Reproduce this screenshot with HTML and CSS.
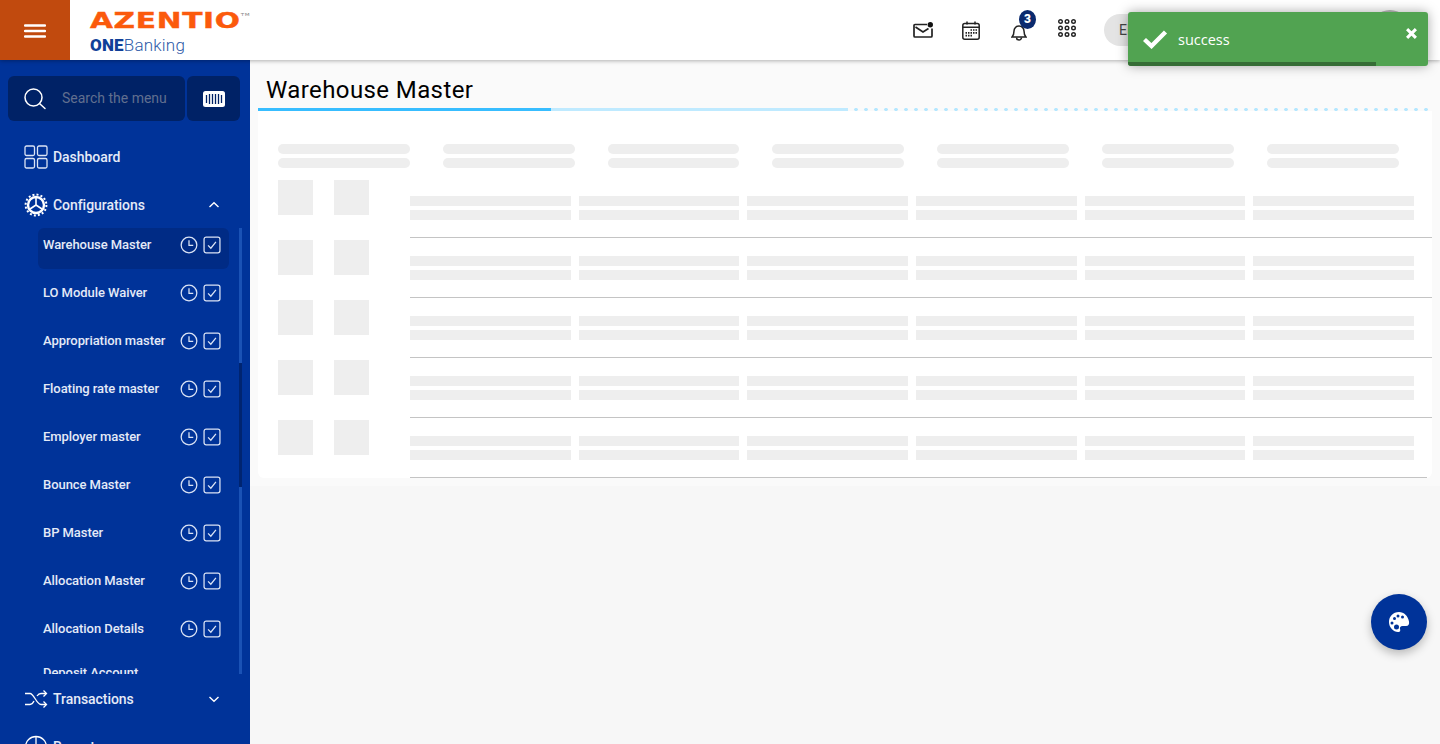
FILE: index.html
```html
<!DOCTYPE html>
<html lang="en">
<head>
    <meta charset="UTF-8">
    <meta name="viewport" content="width=device-width, initial-scale=1.0">
    <title>Warehouse Master</title>
    <link rel="stylesheet" href="styles.css">
</head>
<body>
    <header class="topbar">
        <button class="menu-btn" title="Menu">
            <svg width="22" height="14" viewBox="0 0 22 14"><path d="M1 1.500h20M1 7h20M1 12.500h20" stroke="#fff" stroke-width="2.400" stroke-linecap="round"/></svg>
        </button>
        <div class="logo">
            <div class="logo-main">AZENTIO<sup>TM</sup></div>
            <div class="logo-sub"><b>ONE</b>Banking</div>
        </div>
        <div class="top-actions">
            <div class="top-slot">
                <svg width="20" height="16" viewBox="0 0 20 16" fill="none" stroke="#222" stroke-width="1.700"><path d="M14 2.500H2a1 1 0 0 0-1 1V14a1 1 0 0 0 1 1h16a1 1 0 0 0 1-1V6.500"/><path d="M2.500 5l7.500 5 5.500-3.500"/><circle cx="17.300" cy="2.700" r="2.700" fill="#111" stroke="none"/></svg>
            </div>
            <div class="top-slot">
                <svg width="18" height="19" viewBox="0 0 18 19" fill="none" stroke="#222" stroke-width="1.500"><rect x="0.800" y="2.500" width="16.400" height="15.700" rx="2"/><path d="M0.800 6.300h16.400M5 0.500v3M13 0.500v3"/><path d="M8.500 9h1.500M11 9h1.500M13.500 9h1.500M3.500 11.800h1.500M6 11.800h1.500M8.500 11.800h1.500M11 11.800h1.500M13.500 11.800h1.500M3.500 14.600h1.500M6 14.600h1.500M8.500 14.600h1.500" stroke-width="1.700"/></svg>
            </div>
            <div class="top-slot">
                <div class="bell">
                    <svg width="16" height="19" viewBox="0 0 16 19" fill="none" stroke="#222" stroke-width="1.500"><path d="M1 15c1.500-1.500 2-2.500 2-6a5 5 0 0 1 10 0c0 3.500 .5 4.500 2 6z"/><path d="M5.500 15.500a2.500 2.500 0 0 0 5 0"/></svg>
                    <span class="badge">3</span>
                </div>
            </div>
            <div class="top-slot">
                <svg class="grid-icon" width="18" height="18" viewBox="0 0 18 18" fill="none" stroke="#222" stroke-width="1.400"><circle cx="2.500" cy="2.500" r="1.800"/><circle cx="9" cy="2.500" r="1.800"/><circle cx="15.500" cy="2.500" r="1.800"/><circle cx="2.500" cy="9" r="1.800"/><circle cx="9" cy="9" r="1.800"/><circle cx="15.500" cy="9" r="1.800"/><circle cx="2.500" cy="15.500" r="1.800"/><circle cx="9" cy="15.500" r="1.800"/><circle cx="15.500" cy="15.500" r="1.800"/></svg>
            </div>
            <div class="lang-pill">EN</div>
            <div class="avatar"></div>
        </div>
    </header>

    <div class="layout">
        <aside class="sidebar">
            <div class="search-row">
                <div class="search-box">
                    <svg width="24" height="24" viewBox="0 0 24 24" fill="none" stroke="#fff" stroke-width="1.500"><circle cx="10.500" cy="10.500" r="8.500"/><path d="M16.500 16.500l5.500 5" stroke-linecap="round"/></svg>
                    <span>Search the menu</span>
                </div>
                <div class="scan-box">
                    <svg width="22" height="16" viewBox="0 0 22 16"><rect width="22" height="16" rx="2.500" fill="#fff"/><path d="M3.500 4v8M6.500 3v10M9.500 3v10M12.500 3v10M15.500 3v10M18.500 4v8" stroke="#002266" stroke-width="1.300"/></svg>
                </div>
            </div>

            <a class="nav-item">
                <svg width="24" height="24" viewBox="0 0 24 24" fill="none" stroke="#dbe4f5" stroke-width="1.300"><rect x="1" y="1" width="9.500" height="9.500" rx="1.500"/><rect x="13.500" y="1" width="9.500" height="9.500" rx="1.500"/><rect x="1" y="13.500" width="9.500" height="9.500" rx="1.500"/><rect x="13.500" y="13.500" width="9.500" height="9.500" rx="1.500"/></svg>
                <span>Dashboard</span>
            </a>
            <a class="nav-item">
                <svg width="24" height="24" viewBox="0 0 24 24" fill="none" stroke="#fff"><circle cx="12" cy="12" r="8" stroke-width="2.400"/><circle cx="12" cy="12" r="10.400" stroke-width="2" stroke-dasharray="2 2.100"/><path d="M12 12V5M12 12l6 4M12 12l-6 4" stroke-width="1.600"/></svg>
                <span>Configurations</span>
                <svg class="chev" width="12" height="8" viewBox="0 0 12 8" fill="none" stroke="#fff" stroke-width="1.400"><path d="M1.500 6L6 1.800 10.500 6"/></svg>
            </a>

            <div class="submenu">
                <div class="sub-scroll">
                    <a class="sub-item active"><span>Warehouse Master</span><svg class="sub-clock" width="18" height="18" viewBox="0 0 17 17"><use href="#ic-clock"/></svg><svg width="18" height="18" viewBox="0 0 17 17"><use href="#ic-check"/></svg></a>
                    <a class="sub-item"><span>LO Module Waiver</span><svg class="sub-clock" width="18" height="18" viewBox="0 0 17 17"><use href="#ic-clock"/></svg><svg width="18" height="18" viewBox="0 0 17 17"><use href="#ic-check"/></svg></a>
                    <a class="sub-item"><span>Appropriation master</span><svg class="sub-clock" width="18" height="18" viewBox="0 0 17 17"><use href="#ic-clock"/></svg><svg width="18" height="18" viewBox="0 0 17 17"><use href="#ic-check"/></svg></a>
                    <a class="sub-item"><span>Floating rate master</span><svg class="sub-clock" width="18" height="18" viewBox="0 0 17 17"><use href="#ic-clock"/></svg><svg width="18" height="18" viewBox="0 0 17 17"><use href="#ic-check"/></svg></a>
                    <a class="sub-item"><span>Employer master</span><svg class="sub-clock" width="18" height="18" viewBox="0 0 17 17"><use href="#ic-clock"/></svg><svg width="18" height="18" viewBox="0 0 17 17"><use href="#ic-check"/></svg></a>
                    <a class="sub-item"><span>Bounce Master</span><svg class="sub-clock" width="18" height="18" viewBox="0 0 17 17"><use href="#ic-clock"/></svg><svg width="18" height="18" viewBox="0 0 17 17"><use href="#ic-check"/></svg></a>
                    <a class="sub-item"><span>BP Master</span><svg class="sub-clock" width="18" height="18" viewBox="0 0 17 17"><use href="#ic-clock"/></svg><svg width="18" height="18" viewBox="0 0 17 17"><use href="#ic-check"/></svg></a>
                    <a class="sub-item"><span>Allocation Master</span><svg class="sub-clock" width="18" height="18" viewBox="0 0 17 17"><use href="#ic-clock"/></svg><svg width="18" height="18" viewBox="0 0 17 17"><use href="#ic-check"/></svg></a>
                    <a class="sub-item"><span>Allocation Details</span><svg class="sub-clock" width="18" height="18" viewBox="0 0 17 17"><use href="#ic-clock"/></svg><svg width="18" height="18" viewBox="0 0 17 17"><use href="#ic-check"/></svg></a>
                    <a class="sub-item last"><span>Deposit Account</span></a>
                </div>
                <div class="sub-track"><div class="sub-thumb"></div></div>
            </div>

            <a class="nav-item">
                <svg width="24" height="24" viewBox="0 0 24 24" fill="none" stroke="#fff" stroke-width="1.300"><path d="M1 6.500h5c4 0 6.500 11 11 11h5"/><path d="M1 17.500h5c1.800 0 3-1.500 4-3.500M13 9c1-1.500 2.300-2.500 4-2.500h5"/><path d="M19.500 3.500l3 3-3 3M19.500 14.500l3 3-3 3"/></svg>
                <span>Transactions</span>
                <svg class="chev" width="12" height="8" viewBox="0 0 12 8" fill="none" stroke="#fff" stroke-width="1.400"><path d="M1.500 2L6 6.200 10.500 2"/></svg>
            </a>
            <a class="nav-item">
                <svg width="24" height="24" viewBox="0 0 24 24" fill="none" stroke="#fff" stroke-width="1.300"><circle cx="12" cy="12" r="10.500"/><path d="M12 1.500V22M12 12h10.500"/></svg>
                <span>Reports</span>
            </a>
        </aside>

        <main class="content">
            <h1 class="page-title">Warehouse Master</h1>
            <div class="title-rule">
                <div class="rule-strong"></div>
                <div class="rule-light"></div>
                <div class="rule-dots"></div>
            </div>
            <section class="card">
                <div class="sk-head">
                    <div class="sk-pair"><i></i><i></i></div>
                    <div class="sk-pair"><i></i><i></i></div>
                    <div class="sk-pair"><i></i><i></i></div>
                    <div class="sk-pair"><i></i><i></i></div>
                    <div class="sk-pair"><i></i><i></i></div>
                    <div class="sk-pair"><i></i><i></i></div>
                    <div class="sk-pair"><i></i><i></i></div>
                </div>
                <div class="sk-row">
                    <div class="sk-squares"><i></i><i></i></div>
                    <div class="sk-cells"><div><i></i><i></i></div><div><i></i><i></i></div><div><i></i><i></i></div><div><i></i><i></i></div><div><i></i><i></i></div><div><i></i><i></i></div></div>
                </div>
                <div class="sk-row">
                    <div class="sk-squares"><i></i><i></i></div>
                    <div class="sk-cells"><div><i></i><i></i></div><div><i></i><i></i></div><div><i></i><i></i></div><div><i></i><i></i></div><div><i></i><i></i></div><div><i></i><i></i></div></div>
                </div>
                <div class="sk-row">
                    <div class="sk-squares"><i></i><i></i></div>
                    <div class="sk-cells"><div><i></i><i></i></div><div><i></i><i></i></div><div><i></i><i></i></div><div><i></i><i></i></div><div><i></i><i></i></div><div><i></i><i></i></div></div>
                </div>
                <div class="sk-row">
                    <div class="sk-squares"><i></i><i></i></div>
                    <div class="sk-cells"><div><i></i><i></i></div><div><i></i><i></i></div><div><i></i><i></i></div><div><i></i><i></i></div><div><i></i><i></i></div><div><i></i><i></i></div></div>
                </div>
                <div class="sk-row">
                    <div class="sk-squares"><i></i><i></i></div>
                    <div class="sk-cells"><div><i></i><i></i></div><div><i></i><i></i></div><div><i></i><i></i></div><div><i></i><i></i></div><div><i></i><i></i></div><div><i></i><i></i></div></div>
                </div>
            </section>
        </main>
    </div>

    <div class="toast">
        <svg width="26" height="20" viewBox="0 0 26 20" fill="none" stroke="#fff" stroke-width="4.400"><path d="M1.500 10.500l7 6.500L22.500 3"/></svg>
        <span class="toast-msg">success</span>
        <svg class="toast-close" width="11" height="11" viewBox="0 0 10 10" stroke="#fff" stroke-width="2.800"><path d="M1 1l8 8M9 1l-8 8"/></svg>
        <div class="toast-progress"></div>
    </div>

    <button class="fab" title="Theme">
        <svg width="22" height="22" viewBox="0 0 22 22"><path fill="#fff" fill-rule="evenodd" d="M11 1C5 1 1 5.500 1 11c0 5.500 4.500 10 9 10 2.500 0 2.500-1.500 2-3-.5-1.500.5-3 2.500-3H18c2.500 0 3.500-2 3-4.500C20 5 16 1 11 1zM6.500 6a1.500 1.500 0 1 1 0 3 1.500 1.500 0 0 1 0-3zM4 10.500a1.500 1.500 0 1 1 0 3 1.500 1.500 0 0 1 0-3zM10 3.500a1.500 1.500 0 1 1 0 3 1.500 1.500 0 0 1 0-3zM14.500 4.500a1.500 1.500 0 1 1 0 3 1.500 1.500 0 0 1 0-3zM8.500 13.500a2.500 2.500 0 1 1 0 5 2.500 2.500 0 0 1 0-5z"/></svg>
    </button>

    <svg class="defs" width="0" height="0">
        <symbol id="ic-clock" viewBox="0 0 17 17"><g fill="none" stroke="#dbe4f5" stroke-width="1.200"><circle cx="8.500" cy="8.500" r="7.400"/><path d="M8.500 4v4.800h4"/></g></symbol>
        <symbol id="ic-check" viewBox="0 0 17 17"><g fill="none" stroke="#dbe4f5" stroke-width="1.200"><rect x="1" y="1" width="15" height="15" rx="2"/><path d="M4.800 8.800l2.600 2.700 4.800-6"/></g></symbol>
    </svg>
</body>
</html>
```

FILE: styles.css
```css
* {
    margin: 0;
    padding: 0;
    box-sizing: border-box;
}

body {
    font-family: Roboto, 'Liberation Sans', sans-serif;
    background: #f7f7f7;
    height: 744px;
    overflow: hidden;
    position: relative;
}

.defs {
    position: absolute;
}

/* Top bar */
.topbar {
    height: 60px;
    display: flex;
    align-items: center;
    background: #fff;
    box-shadow: 0 1px 4px rgba(0, 0, 0, 0.3);
    position: relative;
    z-index: 5;
}

.menu-btn {
    width: 70px;
    height: 60px;
    padding-top: 1px;
    border: none;
    background: #c14a0e;
    display: flex;
    align-items: center;
    justify-content: center;
}

.logo {
    margin-left: 20px;
    width: 170px;
}

.logo-main {
    font-family: 'DejaVu Sans', sans-serif;
    font-weight: 700;
    font-size: 21px;
    line-height: 20px;
    color: #fb5a0c;
    letter-spacing: 0.5px;
    -webkit-text-stroke: 0.4px #fb5a0c;
    transform: scaleX(1.41);
    transform-origin: left center;
    white-space: nowrap;
}

.logo-main sup {
    font-size: 4px;
    font-weight: 400;
    color: #888;
    -webkit-text-stroke: 0;
    vertical-align: 12px;
}

.logo-sub {
    margin-top: 4px;
    font-size: 17px;
    line-height: 20px;
    font-weight: 300;
    letter-spacing: 0.2px;
    color: #2d5aa8;
}

.logo-sub b {
    font-weight: 900;
    color: #0f3f98;
}

.top-actions {
    margin-left: auto;
    display: flex;
    align-items: center;
    padding-right: 30px;
}

.top-slot {
    width: 48px;
    display: flex;
    justify-content: center;
}

.grid-icon {
    margin-top: -4px;
}

.bell {
    position: relative;
    width: 16px;
    height: 19px;
    margin-top: 3px;
}

.badge {
    position: absolute;
    top: -12px;
    left: 8px;
    width: 17px;
    height: 19px;
    border-radius: 50%;
    background: #0a2a6e;
    color: #fff;
    font-size: 12px;
    font-weight: 900;
    line-height: 19px;
    text-align: center;
}

.lang-pill {
    width: 120px;
    height: 32px;
    margin-left: 13px;
    padding-left: 15px;
    border-radius: 16px;
    background: #e4e4e4;
    color: #444;
    font-size: 14px;
    line-height: 32px;
}

.avatar {
    width: 40px;
    height: 40px;
    margin-left: 146px;
    border-radius: 50%;
    background: #bbb;
}

/* Sidebar */
.layout {
    display: flex;
    height: 684px;
}

.sidebar {
    width: 250px;
    flex-shrink: 0;
    background: #003399;
    overflow: hidden;
}

.search-row {
    display: flex;
    gap: 2px;
    padding: 16px 10px 0 8px;
    margin-bottom: 12px;
}

.search-box {
    width: 177px;
    height: 45px;
    display: flex;
    align-items: center;
    gap: 15px;
    padding-left: 15px;
    background: #002266;
    border-radius: 6px;
    color: #616f8f;
    font-size: 14px;
}

.search-box span {
    margin-bottom: 2px;
}

.scan-box {
    width: 53px;
    height: 45px;
    display: flex;
    align-items: center;
    justify-content: center;
    background: #002266;
    border-radius: 6px;
}

.nav-item {
    height: 48px;
    display: flex;
    align-items: center;
    gap: 5px;
    padding: 0 30px 0 24px;
    color: #e4eaf7;
    font-size: 14px;
    font-weight: 500;
    letter-spacing: -0.05px;
}

.chev {
    margin-left: auto;
}

.submenu {
    height: 446px;
    display: flex;
    margin-top: -1px;
    margin-bottom: 1px;
}

.sub-scroll {
    width: 239px;
    height: 100%;
    overflow: hidden;
    padding-left: 38px;
}

.sub-item {
    width: 191px;
    height: 48px;
    display: flex;
    align-items: center;
    padding: 0 8px 14px 5px;
    color: #e4eaf7;
    font-size: 13px;
    font-weight: 500;
    letter-spacing: -0.06px;
    white-space: nowrap;
}

.sub-item span {
    margin-bottom: 2px;
}

.sub-item.active {
    height: 41px;
    margin-bottom: 7px;
    padding-bottom: 7px;
    background: #002b85;
    border-radius: 6px;
}

/* the last row is cut by the scroll area, its label sits higher */
.sub-item.last {
    align-items: flex-start;
    padding: 5px 8px 0 5px;
}

.sub-clock {
    margin-left: auto;
    margin-right: 5px;
}

.sub-track {
    width: 3px;
    height: 100%;
    background: #1a52b5;
    position: relative;
}

.sub-thumb {
    position: absolute;
    left: 0;
    top: 135px;
    width: 3px;
    height: 124px;
    background: #002470;
}

/* Main area */
.content {
    flex: 1;
    padding: 8px 8px 0;
    background: linear-gradient(#fafafa, #fafafa 426px, #f7f7f7 426px);
}

.page-title {
    height: 40px;
    padding: 8px 0 0 8px;
    font-size: 24px;
    font-weight: 400;
    line-height: 28px;
    letter-spacing: 0.4px;
    color: #000;
}

.title-rule {
    display: flex;
    height: 3px;
    margin-right: 2px;
}

.rule-strong {
    width: 293px;
    background: #38bdff;
}

.rule-light {
    width: 297px;
    background: #bfeaff;
}

.rule-dots {
    flex: 1;
    background: radial-gradient(circle, #b5e7ff 1.5px, transparent 2px) 3px center / 10px 3px repeat-x;
}

.card {
    height: 367px;
    padding: 33px 0 0 20px;
    background: #fff;
    border-radius: 0 0 6px 6px;
}

.sk-head {
    display: flex;
    gap: 33px;
    height: 36px;
}

.sk-pair {
    width: 131.83px;
}

.sk-pair i {
    display: block;
    height: 10px;
    margin-bottom: 4px;
    border-radius: 5px;
    background: #eee;
}

.sk-row {
    display: flex;
    height: 60px;
}

.sk-squares {
    width: 132px;
    display: flex;
    gap: 21px;
}

.sk-squares i {
    width: 35px;
    height: 35px;
    background: #eee;
}

.sk-cells {
    flex: 1;
    display: flex;
    gap: 8px;
    padding: 16px 18px 0 0;
    margin-bottom: 2px;
    border-bottom: 1px solid #c4c4c4;
}

.sk-cells div {
    flex: 1;
}

.sk-cells i {
    display: block;
    height: 10px;
    margin-bottom: 4px;
    background: #eee;
}

.sk-row:last-child .sk-cells {
    margin-right: 5px;
    padding-right: 13px;
}

/* Toast and floating button */
.toast {
    position: absolute;
    top: 12px;
    left: 1128px;
    width: 300px;
    height: 54px;
    display: flex;
    align-items: center;
    padding: 0 11px 0 15px;
    background: #51a351;
    border-radius: 3px;
    box-shadow: 0 0 12px rgba(0, 0, 0, 0.35);
    color: #fff;
    z-index: 10;
    overflow: hidden;
}

.toast-msg {
    margin-left: 9px;
    font-family: 'Open Sans', sans-serif;
    font-size: 14.5px;
}

.toast-close {
    margin-left: auto;
    margin-bottom: 11px;
}

.toast-progress {
    position: absolute;
    left: 0;
    bottom: 0;
    width: 248px;
    height: 4px;
    background: #366d36;
}

.fab {
    position: absolute;
    left: 1371px;
    top: 594px;
    width: 56px;
    height: 56px;
    display: flex;
    align-items: center;
    justify-content: center;
    border: none;
    border-radius: 50%;
    background: #003399;
    box-shadow: 0 4px 10px rgba(0, 0, 0, 0.25);
    z-index: 6;
}
```
